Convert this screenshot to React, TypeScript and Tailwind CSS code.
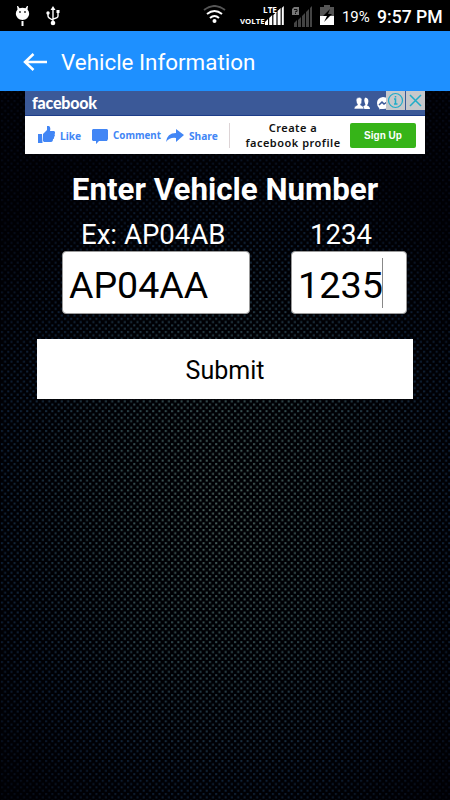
import React from 'react';

const font = "font-['Roboto','Liberation_Sans',sans-serif]";

function Texture() {
  return (
    <svg className="absolute inset-0 h-full w-full" aria-hidden="true">
      <defs>
        <pattern id="dots" width="6.3" height="6.6" patternUnits="userSpaceOnUse">
          <rect x="1" y="1" width="2" height="2" fill="#fff" />
          <rect x="4.15" y="4.3" width="2" height="2" fill="#fff" />
        </pattern>
        <mask id="dotMask"><rect width="450" height="800" fill="url(#dots)" /></mask>
        <radialGradient id="glow" gradientUnits="userSpaceOnUse" cx="0" cy="0" r="1" gradientTransform="translate(225 510) scale(320 390)">
          <stop offset="0" stopColor="#4c625d" />
          <stop offset=".35" stopColor="#324b50" />
          <stop offset=".7" stopColor="#10233a" />
          <stop offset="1" stopColor="#050a18" />
        </radialGradient>
      </defs>
      <rect width="450" height="800" fill="url(#glow)" mask="url(#dotMask)" />
    </svg>
  );
}

function Bars({ color }: { color: string }) {
  return (
    <svg width="20" height="20" viewBox="0 0 20 20" fill={color} className="shrink-0">
      <path d="M0 16l3-3v6H0zM4.2 12l3-3v10h-3zM8.4 9l3-3v13h-3zM12.6 5l3-3v17h-3zM16.8 2l2-2v19h-2z" />
    </svg>
  );
}

function StatusBar() {
  return (
    <div className="flex h-[31px] items-start bg-black text-white">
      <svg width="16" height="22" viewBox="0 0 16 22" className="ml-[15px] mt-[5px] shrink-0" fill="#fff">
        <path d="M2 1h1l1.500 2.300q3-1 6 0L12 1h1l-.5 3.500q1.700 1.500 1.700 4.500-.7 5.500-6.700 6-6-.5-6.700-6 0-3 1.700-4.500z" />
        <rect x="6.500" y="16" width="2" height="5" />
        <circle cx="5" cy="7" r=".9" fill="#222" /><circle cx="10" cy="7" r=".9" fill="#222" />
      </svg>
      <svg width="14" height="20" viewBox="0 0 14 20" className="ml-[15px] mt-[6px] shrink-0" fill="none" stroke="#fff" strokeWidth="1.400">
        <path d="M7 3v13M2 7v3q0 2 5 4M12 7v3q0 2-5 3" />
        <path d="M7 0l2.500 4h-5zM10.500 4h3v3h-3z" fill="#fff" stroke="none" />
        <circle cx="2" cy="7" r="1.700" fill="#fff" stroke="none" /><circle cx="7" cy="17" r="2.300" fill="#fff" stroke="none" />
      </svg>
      <svg width="23" height="19" viewBox="0 0 23 19" className="ml-[143px] mt-[5px] shrink-0" fill="none" strokeWidth="2">
        <path d="M1 5q10.500-8 21 0" stroke="#555" />
        <path d="M4 9q7.500-6 15 0M7 13q4.500-4 9 0" stroke="#fff" />
        <circle cx="11.500" cy="16" r="2" fill="#fff" />
      </svg>
      <div className="ml-[14px] mt-[5px] w-[26px] shrink-0 font-['Open_Sans'] text-[8.2px] font-bold leading-[9px]">
        <div className="pl-[23px]">LTE</div>
        <div className="mt-[3px] text-[7.8px] leading-[9px]">VOLTE</div>
      </div>
      <div className="-ml-px mt-[6px]"><Bars color="#fff" /></div>
      <svg width="22" height="22" viewBox="0 0 22 22" className="ml-[6px] mt-[5px] shrink-0" fill="#444">
        <path d="M3 2h5v8H1V4z" fill="#777" />
        <path d="M3 18l3-3v7H3zM7 15l3-3v10H7zM11 11l3-3v14h-3zM15 7l3-3v18h-3zM19 3l2-2v21h-2z" />
        <path d="M3 4.500h3v2H4.500v1M4.500 8v1" stroke="#111" fill="none" />
      </svg>
      <svg width="14" height="20" viewBox="0 0 14 20" className="ml-[7px] mt-[5px] shrink-0">
        <path d="M4 0h6v2h4v9H0V2h4z" fill="#555" /><path d="M0 11h14v9H0z" fill="#fff" />
        <path d="M10 4l-7 7h4l-3 6 8-8H8z" fill="#000" />
      </svg>
      <span className="ml-[8px] mt-[7px] w-[28px] shrink-0 text-[15px] leading-[20px] tracking-[-0.1px]">19%</span>
      <span className="ml-[7px] mt-[6px] whitespace-nowrap text-[17.6px] font-medium leading-[22px]">9:57 PM</span>
    </div>
  );
}

function AdBanner() {
  return (
    <div className="relative mx-auto h-[63px] w-[400px] bg-white font-['Noto_Sans',sans-serif]">
      <div className="flex h-[25px] items-center border-b border-[#1d3c88] bg-[#3b5998] pl-[7px]">
        <span className="w-[65px] font-['Lato'] text-[16px] font-black leading-[20px] tracking-[-0.2px] text-white">facebook</span>
        <svg width="16" height="13" viewBox="0 0 16 13" className="ml-[257px]" fill="#fff">
          <path d="M8.500 12q0-3 3-4-2.500-6 0-7.500 4 1 2.500 6l-1 2q3 1 3 3.500z" />
          <path d="M0 12q0-3 3.500-4Q1 3 3 1q3-2 5 1 0 4-1.500 6Q10 9 10 12z" stroke="#3b5998" strokeWidth=".6" />
        </svg>
        <svg width="12" height="13" viewBox="0 0 12 13" className="ml-[7px]"><path d="M6 0q6 0 6 6t-6 6H3v1l-1-2Q0 9 0 6q0-5 6-6" fill="#fff" /><path d="M2 8l3-3 2 2 3-2" fill="none" stroke="#3b5998" strokeWidth="1.500" /></svg>
      </div>
      <div className="flex h-[38px] items-center text-[10.2px] font-bold text-[#4286f5]">
        <svg width="17" height="17" viewBox="0 0 17 17" className="-mt-px ml-[13px] shrink-0" fill="#4286f5"><path d="M0 8h4l.5 9H0zM5 8l4-4V0h2q2 1 1 5h4q2 1 .5 3 1 2-.5 3 .5 2-1 2 0 3-2 3H6l-1-1z" /></svg>
        <span className="ml-[5px] mt-[3px] w-[21px]">Like</span>
        <svg width="16" height="15" viewBox="0 0 16 15" className="ml-[11px] mt-[2px] shrink-0" fill="#4286f5"><path d="M1 0h14l1 1v9l-1 2H7l-3 3v-3H1l-1-1V1z" /></svg>
        <span className="ml-[5px] mt-[3px] w-[48px] text-[9.8px]">Comment</span>
        <svg width="18" height="14" viewBox="0 0 18 14" className="ml-[5px] mt-[2px] shrink-0" fill="#4286f5"><path d="M10 0l8 6-8 7V9Q4 8 0 13 1 4 10 4z" /></svg>
        <span className="ml-[5px] mt-[3px] w-[29px]">Share</span>
        <div className="ml-[11px] h-[25px] w-px bg-[#ddd4d6]" />
        <div className="ml-[13px] w-[100px] whitespace-nowrap text-center text-[11px] font-semibold leading-[15px] tracking-[0.5px] text-[#111]">
          <div>Create a</div>
          <div>facebook profile</div>
        </div>
        <div className="ml-[7px] h-[25px] w-[66px] rounded-[2px] bg-[#36b418] text-center font-['Liberation_Sans'] text-[10px] font-bold leading-[25px] text-white">Sign Up</div>
      </div>
      <div className="absolute right-0 top-0 flex gap-px">
        <div className="h-[19px] w-[19px] bg-[#c6c8cb]"><svg viewBox="0 0 19 19" fill="none" stroke="#20acc8" strokeWidth="1.200"><circle cx="9.500" cy="9.500" r="7" /><path d="M8 8h1.500v5M8 13h3.500M9.500 5v1.500" strokeWidth="1.500" /></svg></div>
        <div className="h-[19px] w-[19px] bg-[#c6c8cb]"><svg viewBox="0 0 19 19" fill="none" stroke="#20acc8" strokeWidth="1.500"><path d="M4 4l11 11M15 4L4 15" /></svg></div>
      </div>
    </div>
  );
}

export default function App() {
  return (
    <div className={`relative h-[800px] w-[450px] overflow-hidden bg-[#000004] ${font}`}>
      <Texture />
      <div className="relative">
        <StatusBar />
        <header className="flex h-[60px] items-center bg-[#1e90ff] text-white">
          <svg width="24" height="18" viewBox="0 0 24 18" className="ml-[23px] mt-px" fill="none" stroke="#fff" strokeWidth="2.500"><path d="M10.500 1L2 9l8.500 8M2 9h22" /></svg>
          <h1 className="ml-[14px] mt-px text-[22.4px] leading-[30px]">Vehicle Information</h1>
        </header>
        <AdBanner />
        <main className="text-white">
          <h2 className="mt-[17px] text-center text-[31.3px] font-bold leading-[38px]">Enter Vehicle Number</h2>
          <div className="mt-[7px] flex">
            <div className="ml-[62px] w-[188px]">
              <div className="h-[35px] pl-[19px] text-[27.6px] leading-[38px]">Ex: AP04AB</div>
              <div className="h-[63px] rounded-[4px] border border-[#999] bg-white pl-[6px] text-[37.5px] leading-[66px] text-black">AP04AA</div>
            </div>
            <div className="ml-[41px] w-[116px]">
              <div className="h-[35px] pl-[19px] text-[27.6px] leading-[38px]">1234</div>
              <div className="flex h-[63px] items-start rounded-[4px] border border-[#999] bg-white pl-[6px] text-[37.8px] leading-[66px] text-black">
                <span>1235</span><span className="-ml-px mt-[6px] h-[50px] w-px bg-[#888]" />
              </div>
            </div>
          </div>
          <button className="mx-auto mt-[25px] block h-[60px] w-[376px] bg-white text-center text-[25px] leading-[63px] text-black">Submit</button>
        </main>
      </div>
    </div>
  );
}
